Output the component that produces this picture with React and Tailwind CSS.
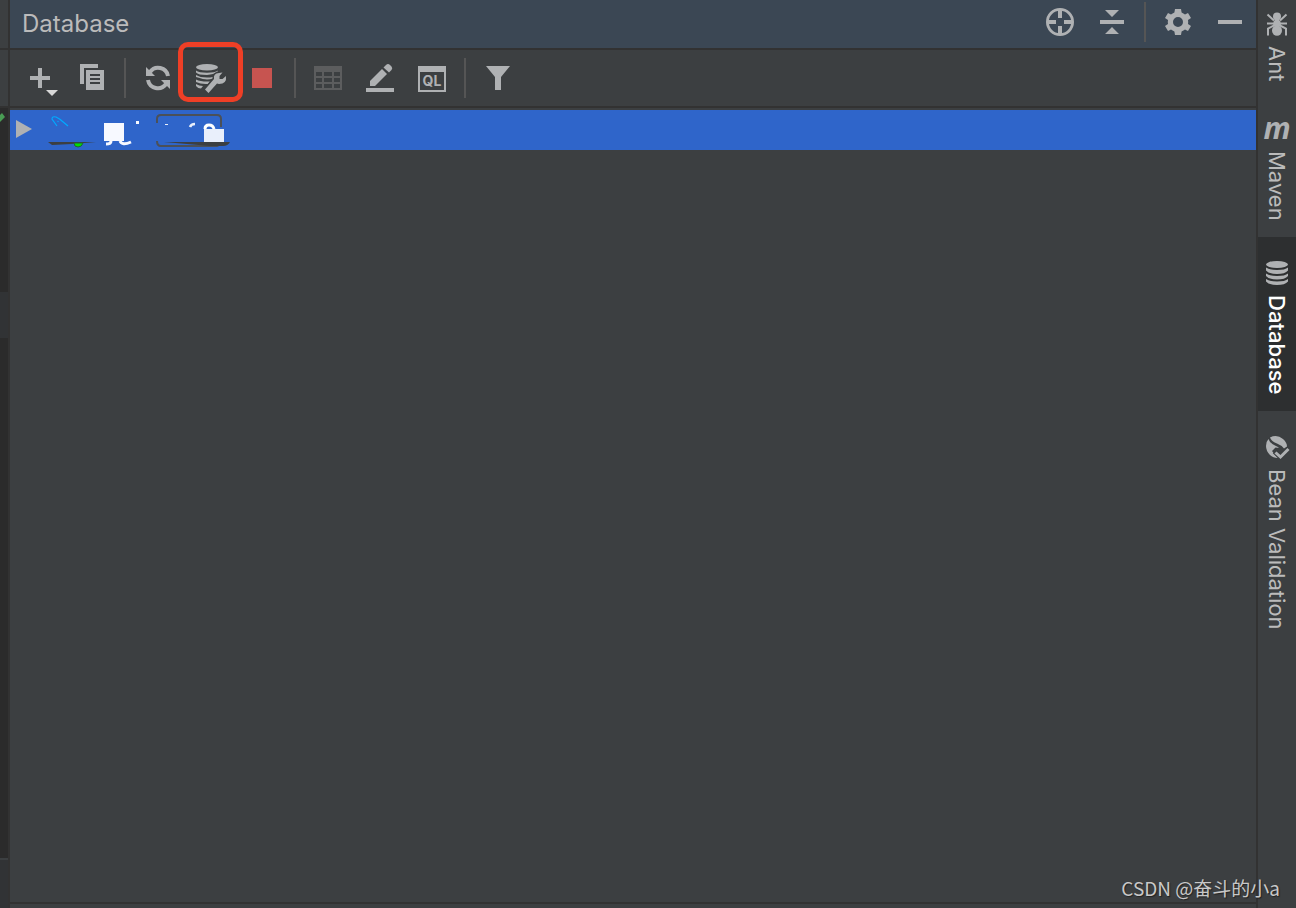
const toolbar = [
  { id: "new", label: "New" },
  { id: "copy", label: "Duplicate" },
  { id: "sep1" },
  { id: "refresh", label: "Refresh" },
  { id: "properties", label: "Data Source Properties", marked: true },
  { id: "stop", label: "Deactivate" },
  { id: "sep2" },
  { id: "table", label: "Open Table", disabled: true },
  { id: "edit", label: "Edit" },
  { id: "ql", label: "Open Query Console" },
  { id: "sep3" },
  { id: "filter", label: "Filter" },
];

const headerActions = [
  { id: "locate", label: "Select Opened Element" },
  { id: "collapse", label: "Collapse All" },
  { id: "sep" },
  { id: "gear", label: "Settings" },
  { id: "minus", label: "Hide" },
];

const stripe = [
  { id: "ant", label: "Ant", className: "pt-3 pb-4" },
  { id: "maven", label: "Maven", className: "pt-5 pb-4" },
  { id: "database", label: "Database", className: "pt-6 pb-4 bg-[#2d2f30] text-white font-medium" },
  { id: "bean", label: "Bean Validation", className: "pt-6 pb-4" },
];

// every drawing is centred on 0,0
const drawings = {
  new: (
    <>
      <path d="M-2-10h4v8h8v4h-8v8h-4v-8h-8v-4h8z" />
      <path d="M6 12h12l-6 6z" fill="#d8d8d8" />
    </>
  ),
  copy: (
    <>
      <path d="M-12-14H6v4H-8V6h-4z" />
      <path d="M-6-8h18v20H-6z" />
      <path d="M-2-4H8v2H-2zM-2 0H8v2H-2zM-2 4H8v2H-2z" fill="#3c3f41" />
    </>
  ),
  refresh: (
    <>
      <path d="M-12-11v9h9z" />
      <path d="M12 11V2H3z" />
      <path d="M-8-6A10 10 0 0 1 10-2" fill="none" stroke="#afb1b3" strokeWidth="4" />
      <path d="M8 6A10 10 0 0 1-10 2" fill="none" stroke="#afb1b3" strokeWidth="4" />
    </>
  ),
  properties: (
    <>
      <ellipse cx="-3" cy="-10.8" rx="11" ry="3.2" />
      <path d="M-14-7.500Q-11-5.300-3-5.300T8-7.500Q8-4-3-3Q-12-3-14-5.500z" />
      <path d="M-14-3Q-10-0.500-3-0.500T5-2.500L3 0.500Q0 1.500-3 1.500T-14-1z" />
      <path d="M-14 1.500Q-9 4 0 3.500L-2 6Q-9 6.500-14 4z" />
      <path d="M-14 6Q-11 8-7 8L-9 10.500Q-12 10.500-14 8z" />
      <path
        d="M4 1Q3-4.500 9-5L12.500-5.500 9.500-2V1H12.500L16-2Q17 6 9 6L7 5.500-1.500 15-5 11.500z"
        stroke="#3c3f41"
        strokeWidth="3"
      />
      <path d="M4 1Q3-4.500 9-5L12.500-5.500 9.500-2V1H12.500L16-2Q17 6 9 6L7 5.500-1.500 15-5 11.500z" />
    </>
  ),
  stop: <path d="M-10-10h20v20h-20z" fill="#c75450" />,
  table: (
    <path
      d="M-14-12h28v24h-28zM-12-6v4h6v-4zM-4-6v4h8v-4zM6-6v4h6v-4zM-12 0v4h6v-4zM-4 0v4h8v-4zM6 0v4h6v-4zM-12 6v4h6v-4zM-4 6v4h8v-4zM6 6v4h6v-4z"
      fill="#5c5d5e"
      fillRule="evenodd"
    />
  ),
  edit: (
    <>
      <path d="M-14 10h28v4h-28z" />
      <path d="M-10 8V3L2-9 7-4-5 8z" />
      <path d="M3.500-10.500L6-13Q8-15 10-13L11.500-11.500Q13-10 11.500-8L9-5.500z" />
    </>
  ),
  ql: (
    <>
      <path d="M-14-12h28v26h-28zM-12-6v18h24v-18z" fillRule="evenodd" />
      <text x="0" y="8" textAnchor="middle" fontSize="14" fontWeight="700">QL</text>
    </>
  ),
  filter: <path d="M-12-12h24L3-1v13h-6V-1z" />,
  locate: (
    <>
      <circle r="12.600" fill="none" stroke="#afb1b3" strokeWidth="2.800" />
      <path d="M-2-13h4v9h-4zM-2 4h4v9h-4zM-13-2h9v4h-9zM4-2h9v4H4z" />
    </>
  ),
  collapse: <path d="M-12-2h24v4h-24zM-7-12H7L0-5zM-7 12H7L0 5z" />,
  gear: (
    <path
      d="M-3-13H3L3.600-9.400Q5.500-8.600 7-7.400L10-9.100 13-4 10-2Q10.400 0 10 2L13 4 10 9.100 7 7.400Q5.500 8.600 3.600 9.400L3 13H-3L-3.600 9.400Q-5.500 8.600-7 7.400L-10 9.100-13 4-10 2Q-10.400 0-10-2L-13-4-10-9.100-7-7.400Q-5.500-8.600-3.600-9.400zM0-5A5 5 0 1 0 0 5A5 5 0 1 0 0-5z"
      fillRule="evenodd"
    />
  ),
  minus: <path d="M-12-2h24v4h-24z" />,
  ant: (
    <>
      <circle cy="-7.500" r="4" />
      <circle cy="-1" r="3.600" />
      <ellipse cy="6.500" rx="5" ry="5.200" />
      <path
        d="M-9.500-9.500L-3-3.500M9.500-9.500L3-3.500M-10-0.500H10M-2 1L-9 4.500V11.500M2 1L9 4.500V11.500"
        fill="none"
        stroke="#afb1b3"
        strokeWidth="2"
      />
    </>
  ),
  maven: (
    <text x="0" y="10" textAnchor="middle" className="font-['Open_Sans',sans-serif]" fontSize="30" fontWeight="700" fontStyle="italic">
      m
    </text>
  ),
  database: (
    <>
      <ellipse cy="-8.500" rx="11" ry="3.500" />
      <path d="M-11-5.500Q-8-3 0-3T11-5.500V-2.500Q8 1 0 1T-11-2.500z" />
      <path d="M-11 0.500Q-8 3 0 3T11 0.500V3Q8 6.500 0 6.500T-11 3z" />
      <path d="M-11 6Q-8 8.500 0 8.500T11 6V8.500Q8 12 0 12T-11 8.500z" />
    </>
  ),
  bean: (
    <>
      <path d="M-7-9.500Q0-13 6-8Q10-4.500 10-0.500L7 1.500Q4-2 0-3.500Q-5-5-7-9.500z" />
      <path d="M-8.500-8Q-7-3.500-2-1.500Q1-0.500 2 1L-1.500 0.500-5 4-1 9 1 11Q-4 11-7 8Q-11 4-11-1Q-11-5.500-8.500-8z" />
      <path d="M-2.500 4.500L3.500 10 11.500 2" fill="none" stroke="#3c3f41" strokeWidth="5" />
      <path d="M-1.500 5.500L3.500 10 11.500 2" fill="none" stroke="#afb1b3" strokeWidth="3" />
    </>
  ),
};

function Icon({ id }) {
  return (
    <svg viewBox="-20 -20 40 40" className="size-10 shrink-0 overflow-visible" fill="#afb1b3" aria-hidden="true">
      {drawings[id]}
    </svg>
  );
}

function Actions({ items }) {
  return items.map((a) =>
    a.label ? (
      <button key={a.id} aria-label={a.label} disabled={a.disabled} className="relative flex h-full w-13 items-center justify-center">
        <Icon id={a.id} />
        {a.marked && <span className="absolute -top-2 -left-[6px] h-15 w-[65px] rounded-[10px] border-5 border-[#ee3f26]" />}
      </button>
    ) : (
      <span key={a.id} className="mx-[6px] h-10 w-[2px] bg-[#555555]" />
    )
  );
}

function EditorEdge() {
  return (
    <div className="flex w-[10px] shrink-0 flex-col border-r-2 border-[#323232] bg-[#2b2b2b]">
      <div className="h-[50px] border-b-2 border-[#323232] bg-[#3c3f41]" />
      <div className="h-[58px] border-b-2 border-[#323232] bg-[#3c3f41]" />
      <svg viewBox="0 0 8 20" className="h-5 w-2">
        <path d="M0 7L2 5 5 9 0 14z" fill="#499c54" />
      </svg>
      <div className="h-41" />
      <div className="h-[46px] bg-[#313335]" />
      <div className="flex-1" />
      <div className="h-[50px] border-t-2 border-[#3c3f41] bg-[#313335]" />
    </div>
  );
}

// data source entry, name painted over
function DataSource() {
  return (
    <svg viewBox="0 0 220 40" className="h-10 w-[220px]" role="img" aria-label="Data source">
      <path d="M6 10L22 19 6 28z" fill="#afb1b3" />
      <path d="M47 16L42 9Q42 6 46 7Q50 9 52 11L58 16" fill="none" stroke="#00aaff" strokeWidth="1.200" />
      <circle cx="48" cy="11.500" r="0.700" fill="#00aaff" />
      <path d="M38 32H86L62 34 42 35z" fill="#3c3f41" />
      <path d="M64 33H73Q72 37 68 37T64 33z" fill="#00e000" stroke="#20603a" />
      <path d="M94 13H114V31H94z" fill="#f7f9ff" />
      <path d="M96 34Q101 34 101 31M110 31Q112 36 121 32" fill="none" stroke="#f7f9ff" strokeWidth="3" />
      <path d="M126 11h3v3h-3z" fill="#f7f9ff" />
      <path d="M147 13V9Q147 5 151 5H207Q211 5 211 9V17" fill="none" stroke="#4b5058" strokeWidth="2" />
      <path d="M147 31Q147 36 151 36H207L211 34" fill="none" stroke="#4b5058" strokeWidth="2" />
      <path d="M154 32H220Q218 36 213 36H200z" fill="#3c3f41" />
      <path d="M155 14.500H158" stroke="#e9effb" />
      <path d="M180 17Q181 14 185 14" fill="none" stroke="#e9effb" strokeWidth="2.500" />
      <path d="M195 19Q195 15 199 15T204 19" fill="none" stroke="#ffffff" strokeWidth="3" />
      <path d="M194 19H214V32H194z" fill="#e9effb" />
    </svg>
  );
}

export default function App() {
  return (
    <div className="relative flex min-h-screen bg-[#3c3f41] font-[Inter,'Noto_Sans_CJK_SC',sans-serif] text-[#bbbbbb]">
      <EditorEdge />

      <main className="flex min-w-0 flex-1 flex-col">
        <header className="flex h-[50px] items-center border-b-2 border-[#323232] bg-[#3b4754] pl-3">
          <h1 className="flex-1 text-2xl">Database</h1>
          <div className="flex h-11 items-center self-start">
            <Actions items={headerActions} />
          </div>
        </header>

        <div className="flex h-[58px] items-center border-b-2 border-[#323232] pl-1">
          <Actions items={toolbar} />
        </div>

        <div className="flex-1 pt-[2px]">
          <div className="h-10 bg-[#2f65ca]">
            <DataSource />
          </div>
        </div>
        <div className="h-[6px] border-t-2 border-[#323232]" />
      </main>

      <nav className="flex w-10 shrink-0 flex-col border-l-2 border-[#323232]">
        {stripe.map((s) => (
          <button key={s.id} className={`flex w-full flex-col items-center gap-[10px] text-[22px] leading-7 ${s.className}`}>
            <span className="flex size-6 items-center justify-center">
              <Icon id={s.id} />
            </span>
            <span className="[writing-mode:vertical-rl]">{s.label}</span>
          </button>
        ))}
      </nav>

      <p className="absolute right-4 bottom-[6px] font-['Noto_Sans_CJK_SC',sans-serif] text-[19px] text-[#c8c8c8] [text-shadow:1px_1px_1px_#222]">
        CSDN @奋斗的小a
      </p>
    </div>
  );
}
